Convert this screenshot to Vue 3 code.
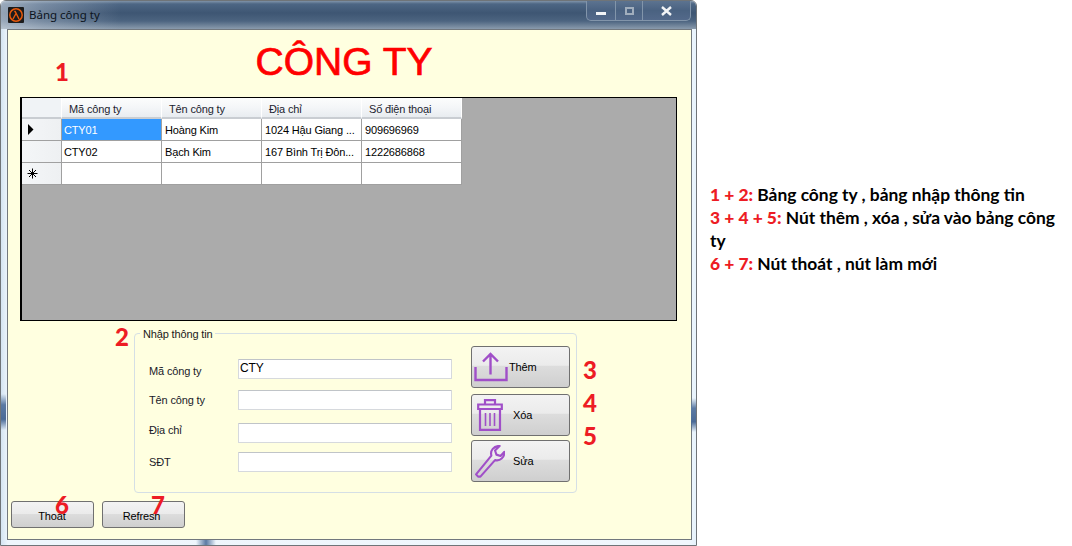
<script setup>
const columns = ['Mã công ty', 'Tên công ty', 'Địa chỉ', 'Số điện thoại']
const rows = [
  { mark: 'current', cells: ['CTY01', 'Hoàng Kim', '1024 Hậu Giang ...', '909696969'] },
  { mark: '', cells: ['CTY02', 'Bạch Kim', '167 Bình Trị Đôn...', '1222686868'] },
  { mark: 'new', cells: ['', '', '', ''] }
]
const fields = [
  { label: 'Mã công ty', value: 'CTY', cls: 'f1' },
  { label: 'Tên công ty', value: '', cls: 'f2' },
  { label: 'Địa chỉ', value: '', cls: 'f3' },
  { label: 'SĐT', value: '', cls: 'f4' }
]
</script>

<template>
  <div class="page">
    <div class="window">
      <div class="titlebar">
        <svg class="appicon" width="16" height="16" viewBox="0 0 16 16">
          <rect width="16" height="16" rx="1" fill="#1c1c1c" />
          <circle cx="8" cy="8" r="6.2" fill="none" stroke="#e8590c" stroke-width="1.5" />
          <path d="M5 12 L8 6.5 M6.2 4.5 H7.2 L11 12" fill="none" stroke="#e8590c" stroke-width="1.4" />
        </svg>
        <span class="wintitle">Bảng công ty</span>
        <div class="controls">
          <div class="ctl ctl-min"><i></i></div>
          <div class="ctl ctl-max"><i></i></div>
          <div class="ctl ctl-close">
            <svg width="13" height="10" viewBox="0 0 13 10"><path d="M2 1 L11 9 M11 1 L2 9" stroke="#f2f4f6" stroke-width="2.4" fill="none" /></svg>
          </div>
        </div>
      </div>
      <div class="client">
        <h1 class="heading">CÔNG TY</h1>
        <div class="grid">
          <div class="grow head">
            <div class="rh"></div>
            <div v-for="c in columns" :key="c" class="hc">{{ c }}</div>
          </div>
          <div v-for="(r, i) in rows" :key="i" class="grow">
            <div class="rh">
              <svg v-if="r.mark === 'current'" width="7" height="11" viewBox="0 0 7 11"><path d="M1 0 L6.5 5.5 L1 11 Z" fill="#000" /></svg>
              <svg v-if="r.mark === 'new'" width="11" height="11" viewBox="0 0 11 11"><path d="M5.5 0.5 V10.5 M0.5 5.5 H10.5 M2 2 L9 9 M9 2 L2 9" stroke="#000" stroke-width="1" fill="none" /></svg>
            </div>
            <div v-for="(v, j) in r.cells" :key="j" class="cell" :class="{ sel: i === 0 && j === 0 }">{{ v }}</div>
          </div>
        </div>

        <fieldset class="group">
          <legend>Nhập thông tin</legend>
          <div class="fields">
            <div v-for="f in fields" :key="f.label" class="field" :class="f.cls">
              <label>{{ f.label }}</label>
              <div class="input">{{ f.value }}</div>
            </div>
          </div>
          <div class="actions">
            <button class="btn big b-them">
              <svg width="34" height="30" viewBox="0 0 34 30" fill="none" stroke="#a04fc8" stroke-width="2.4">
                <path d="M1.5 15 V28 H32.5 V15" />
                <path d="M16.5 22.5 V2 M9 9.5 L16.5 2 L24 9.5" />
              </svg>
              <span>Thêm</span>
            </button>
            <button class="btn big b-xoa">
              <svg width="26" height="32" viewBox="0 0 26 32" fill="none" stroke="#a04fc8" stroke-width="2.2">
                <path d="M1.2 5.5 H24.8 V10 H1.2 Z M8 5 V1.2 H18 V5" />
                <path d="M3 10 V30.8 H23 V10" />
                <path d="M8.5 14 V27 M13 14 V27 M17.5 14 V27" stroke-width="1.6" />
              </svg>
              <span>Xóa</span>
            </button>
            <button class="btn big b-sua">
              <svg width="30" height="33" viewBox="0 0 32 36" fill="none" stroke="#a04fc8" stroke-width="2.3" stroke-linejoin="round">
                <path d="M3 34.5 L0.8 32 L17.5 11.5 C16 6 20 1 26.5 1 L21.5 6 L23 10.5 L27.5 12 L31.5 7.5 C32 13.5 27 18 21.5 16.5 L5.5 34.5 Z" />
              </svg>
              <span>Sửa</span>
            </button>
          </div>
        </fieldset>

        <div class="footer">
          <button class="btn small">Thoát</button>
          <button class="btn small">Refresh</button>
        </div>

        <span class="num n1">1</span>
        <span class="num n2">2</span>
        <span class="num n3">3</span>
        <span class="num n4">4</span>
        <span class="num n5">5</span>
        <span class="num n6">6</span>
        <span class="num n7">7</span>
      </div>
      <div class="edge edge-l"></div>
      <div class="edge edge-r"></div>
      <div class="edge edge-b"></div>
    </div>

    <div class="notes">
      <p><b>1 + 2:</b> Bảng công ty , bảng nhập thông tin</p>
      <p><b>3 + 4 + 5:</b> Nút thêm , xóa , sửa vào bảng công ty</p>
      <p><b>6 + 7:</b> Nút thoát , nút làm mới</p>
    </div>
  </div>
</template>

<style>
html, body { margin: 0; background: #fff; }
</style>

<style scoped>
.page {
  width: 1072px;
  height: 546px;
  display: flex;
  overflow: hidden;
  font-family: "Liberation Sans", Arial, sans-serif;
  font-size: 11px;
  letter-spacing: -0.15px;
  color: #000;
  background: #fff;
}
.window {
  position: relative;
  width: 697px;
  height: 546px;
  flex: none;
  box-sizing: border-box;
  border-radius: 6px 6px 0 0;
  border: 1px solid #6f7478;
  background: linear-gradient(90deg, #d4e4f2 0, #eef6fc 1%, #f0f7fd 99%, #e6f2fb 100%);
}
.titlebar {
  height: 28px;
  display: flex;
  align-items: flex-start;
  padding-left: 7px;
  background: linear-gradient(180deg, #7f93a9 0, #4d6684 3px, #3e5673 12px, #4c6480 20px, #8a9bad 28px);
  border-radius: 5px 5px 0 0;
  position: relative;
}
.titlebar::before {
  content: "";
  position: absolute;
  left: 0;
  top: 0;
  bottom: 0;
  width: 120px;
  background: linear-gradient(90deg, rgba(220,228,236,.55) 0, rgba(200,210,222,.35) 35%, rgba(62,86,115,0) 100%);
  pointer-events: none;
}
.appicon { margin-top: 6px; position: relative; flex: none; }
.wintitle {
  position: relative;
  margin: 6px 0 0 5px;
  font-family: "Noto Sans", "Liberation Sans", sans-serif;
  font-size: 11.5px;
  letter-spacing: 0;
  line-height: 16px;
  color: #0c141c;
}
.controls {
  margin-left: auto;
  margin-right: 5px;
  display: flex;
  height: 19px;
  border: 1px solid #8295aa;
  border-top: 0;
  border-radius: 0 0 5px 5px;
  overflow: hidden;
  background: linear-gradient(180deg, #5c7390 0, #4a6281 50%, #53698a 100%);
}
.ctl { display: flex; align-items: center; justify-content: center; height: 100%; }
.ctl-min { width: 28px; border-right: 1px solid #8295aa; }
.ctl-min i { display: block; width: 10px; height: 3px; background: #f2f4f6; margin-top: 5px; }
.ctl-max { width: 26px; border-right: 1px solid #8295aa; }
.ctl-max i { display: block; width: 5px; height: 4px; border: 2px solid #a1aebd; }
.ctl-close { width: 47px; }

.client {
  position: relative;
  box-sizing: border-box;
  width: 685px;
  height: 511px;
  margin-left: 6px;
  border: 1px solid #72787e;
  background: #ffffe0;
  padding: 1px 0 0 12px;
}
.heading {
  margin: 0;
  height: 66px;
  width: 648px;
  text-align: center;
  font-size: 39px;
  letter-spacing: 0;
  line-height: 62px;
  font-weight: 400;
  color: #ff0000;
  -webkit-text-stroke: .7px #ff0000;
}
.grid {
  box-sizing: border-box;
  width: 657px;
  height: 224px;
  border: 1px solid #000;
  border-left-width: 2px;
  background: #ababab;
}
.grow {
  display: grid;
  grid-template-columns: 40px repeat(4, 100px);
  height: 22px;
}
.grow.head { height: 21px; }
.grow > * { box-sizing: border-box; }
.rh {
  background: linear-gradient(90deg, #f4f6f8 0, #eef0f2 100%);
  border-right: 1px solid #a0a0a0;
  border-bottom: 1px solid #a0a0a0;
  display: flex;
  align-items: center;
  padding-left: 5px;
}
.head .rh { background: #f0f3f6; border-right-color: #fff; border-bottom: 2px solid #c9cdd2; }
.hc {
  background: linear-gradient(180deg, #fcfdfd 0, #f4f6f8 50%, #e8ecf0 100%);
  border-right: 1px solid #fff;
  border-bottom: 2px solid #c9cdd2;
  padding: 4px 0 0 7px;
  line-height: 15px;
  color: #1c2430;
}
.cell {
  background: #fff;
  border-right: 1px solid #a0a0a0;
  border-bottom: 1px solid #a0a0a0;
  padding: 3px 0 0 3px;
  line-height: 16px;
  white-space: nowrap;
  overflow: hidden;
}
.cell:nth-child(2) { padding-left: 2px; }
.cell.sel { background: #3399ff; color: #fff; }

.group {
  box-sizing: border-box;
  width: 443px;
  height: 167px;
  margin: 5px 0 0 114px;
  padding: 0 0 0 14px;
  border: 1px solid #d5dfe5;
  border-radius: 4px;
  display: flex;
  gap: 19px;
  min-inline-size: 0;
}
legend {
  margin-left: -9px;
  padding: 2px 3px 0 3px;
  line-height: 13px;
  color: #1a1a1a;
}
.fields { width: 303px; flex: none; padding-top: 18px; }
.field { display: flex; height: 20px; }
.field label { width: 89px; flex: none; line-height: 15px; color: #1a1a2a; }
.f2 { margin-top: 11px; }
.f3 { margin-top: 13px; }
.f4 { margin-top: 9px; }
.f1 label { padding-top: 5px; }
.f2 label { padding-top: 3px; }
.f3 label { padding-top: 0; }
.f4 label { padding-top: 3px; }
.input {
  box-sizing: border-box;
  width: 214px;
  height: 20px;
  background: #fff;
  border: 1px solid #d6d9dd;
  border-top-color: #c0c4c8;
  border-radius: 1px;
  padding: 0 0 0 1px;
  font-size: 12px;
  line-height: 17px;
}
.actions { padding-top: 5px; display: flex; flex-direction: column; }
.btn {
  box-sizing: border-box;
  border: 1px solid #707070;
  border-radius: 3px;
  background: linear-gradient(180deg, #f3f3f3 0, #ebebeb 46%, #dddddd 47%, #cfcfcf 100%);
  font-family: "Liberation Sans", Arial, sans-serif;
  font-size: 11px;
  letter-spacing: -0.15px;
  color: #000;
  padding: 0;
  margin: 0;
}
.big {
  width: 99px;
  height: 42px;
  display: flex;
  align-items: center;
}
.b-xoa { margin-top: 6px; }
.b-sua { margin-top: 4px; }
.b-them svg { margin-left: 2px; flex: none; }
.b-them span { margin-left: 1px; }
.b-xoa svg { margin-left: 5px; flex: none; }
.b-xoa span { margin-left: 10px; }
.b-sua svg { margin-left: 3px; flex: none; }
.b-sua span { margin-left: 8px; }
.footer { display: flex; gap: 8px; margin: 8px 0 0 -9px; }
.small { width: 83px; height: 27px; padding-top: 2px; }
.small:first-child { padding-right: 1px; }
.small:last-child { padding-right: 4px; }

.num {
  position: absolute;
  font-family: "Lato", "Noto Sans", sans-serif;
  font-weight: 900;
  font-size: 24px;
  letter-spacing: 0;
  line-height: 28px;
  color: #ed1c24;
}
.n1 { left: 47px; top: 28px; }
.n2 { left: 107px; top: 293px; }
.n3 { left: 575px; top: 326px; }
.n4 { left: 575px; top: 359px; }
.n5 { left: 575px; top: 392px; }
.n6 { left: 47px; top: 461px; }
.n7 { left: 143px; top: 461px; }

.edge { position: absolute; pointer-events: none; }
.edge-l { left: 0; top: 393px; width: 5px; height: 36px; background: linear-gradient(180deg, transparent, #5b7aa3 30%, #4a6a96 70%, transparent); }
.edge-r { right: 0; top: 397px; width: 5px; height: 34px; background: linear-gradient(180deg, transparent, #5b7aa3 30%, #4a6a96 70%, transparent); }
.edge-b { left: 195px; bottom: 0; width: 20px; height: 5px; background: linear-gradient(90deg, transparent, #5b7aa3 50%, transparent); }

.notes {
  margin: 183px 0 0 13px;
  width: 352px;
  font-family: "Lato", "Noto Sans", sans-serif;
  font-weight: 700;
  font-size: 17.4px;
  letter-spacing: 0;
  line-height: 23px;
}
.notes p { margin: 0; }
.notes b { color: #ed1c24; }
</style>
